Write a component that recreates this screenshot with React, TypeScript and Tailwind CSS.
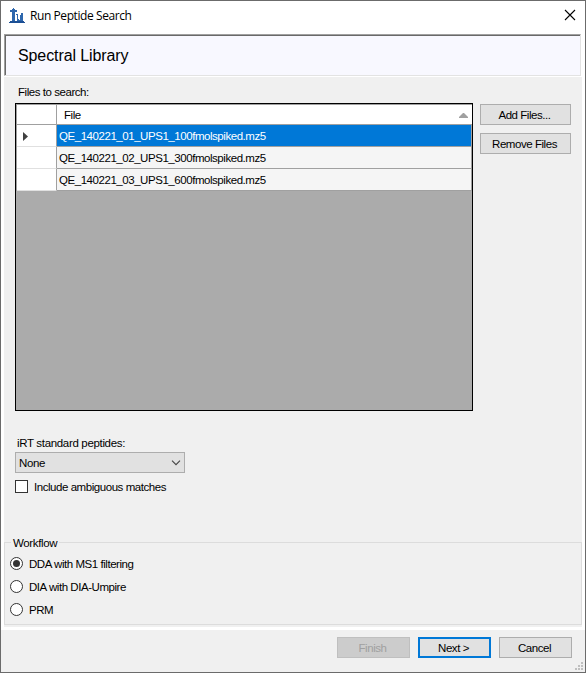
import type { ReactNode } from "react";

const files = [
  "QE_140221_01_UPS1_100fmolspiked.mz5",
  "QE_140221_02_UPS1_300fmolspiked.mz5",
  "QE_140221_03_UPS1_600fmolspiked.mz5",
];

function Label({ children, className = "" }: { children: ReactNode; className?: string }) {
  return <span className={`block whitespace-pre leading-[14px] ${className}`}>{children}</span>;
}

function Button({ children, className = "" }: { children: ReactNode; className?: string }) {
  return (
    <button
      className={`flex h-[21px] shrink-0 items-center justify-center whitespace-pre pr-[2px] leading-[14px] ${className}`}
    >
      {children}
    </button>
  );
}

function Radio({ label, checked = false }: { label: string; checked?: boolean }) {
  return (
    <label className="flex h-[23px] items-center">
      <svg width="13" height="13" viewBox="0 0 13 13" className="mr-[6px]">
        <circle cx="6.5" cy="6.5" r="6" fill="#fff" stroke="#333" />
        {checked && <circle cx="6.5" cy="6.5" r="3.5" fill="#333" />}
      </svg>
      <Label>{label}</Label>
    </label>
  );
}

export default function App() {
  return (
    <div className="flex h-[673px] w-[586px] flex-col overflow-hidden border border-[#6b6b6b] bg-white font-['Liberation_Sans',sans-serif] text-[11.5px] tracking-[-0.45px] text-black">
      <header className="flex h-[33px] shrink-0 items-center pl-[8px] pr-[9px]">
        <svg width="16" height="16" viewBox="0 0 16 16" className="mt-[-3px] shrink-0">
          <path
            d="M4 0h1v1h1v1h2v2H6v9H3V4H1V2h2V1h1zM7 6h2v5h1v1h1V7h1V5h2v8H8V7H7z"
            fill="#2e67ad"
          />
          <path d="M0 14h1v-1h14v1h1v1H0z" fill="#1c4f94" />
        </svg>
        <span className="ml-[5px] mt-[-4px] flex-1 whitespace-pre font-['Open_Sans',sans-serif] text-[12px] leading-[16px] tracking-[-0.42px]">
          Run Peptide Search
        </span>
        <svg width="12" height="12" viewBox="0 0 12 12" className="mt-[-6px]" stroke="#000" strokeWidth="1.1">
          <path d="M1 1l10 10M11 1L1 11" />
        </svg>
      </header>

      <main className="mx-[3px] flex h-[593px] shrink-0 flex-col bg-[#f0f0f0]">
        <div className="h-[43px] shrink-0 border-b border-r border-white">
          <div className="h-full border-b border-l border-r border-t border-b-[#e3e3e3] border-l-[#a0a0a0] border-r-[#e3e3e3] border-t-[#a0a0a0]">
            <div className="flex h-full items-center border-l border-t border-[#696969] bg-[#f8f8ff] pl-[12px]">
              <span className="whitespace-pre text-[16px] leading-[20px] tracking-[-0.1px]">Spectral Library</span>
            </div>
          </div>
        </div>

        <Label className="ml-[14px] mt-[8px]">Files to search:</Label>
        <div className="ml-[11px] mt-[4px] flex">
          <div className="h-[308px] w-[458px] border border-black bg-[#ababab]">
            <div className="h-[87px] border-l border-t border-[#a0a0a0]">
              <div className="flex h-[20px] border-b border-[#a0a0a0] bg-white">
                <div className="w-[40px] border-r border-[#a0a0a0]" />
                <div className="flex flex-1 items-center justify-between pl-[7px] pr-[4px]">
                  <Label>File</Label>
                  <svg width="9" height="5" viewBox="0 0 9 5" className="mt-[2px]" fill="#a0a0a0">
                    <path d="M4 0h1l4 4v1H0V4z" />
                  </svg>
                </div>
              </div>
              {files.map((file, i) => (
                <div key={file} className="flex h-[22px]">
                  <div className="flex w-[40px] items-center border-b border-r border-b-[#e0e0e0] border-r-[#a0a0a0] bg-white pl-[6px]">
                    {i === 0 && (
                      <svg width="5" height="9" viewBox="0 0 5 9" className="mt-[2px]" fill="#404040">
                        <path d="M0 0l5 4.5L0 9z" />
                      </svg>
                    )}
                  </div>
                  <div
                    className={`flex flex-1 items-center border-b border-r border-[#a0a0a0] pl-[2px] ${i === 0 ? "bg-[#0078d7] text-white" : "bg-[#f5f5f5]"}`}
                  >
                    <Label>{file}</Label>
                  </div>
                </div>
              ))}
            </div>
          </div>
          <div className="ml-[7px] mt-[1px] flex flex-col gap-[8px]">
            <Button className="w-[91px] border border-[#adadad] bg-[#e1e1e1]">Add Files...</Button>
            <Button className="w-[91px] border border-[#adadad] bg-[#e1e1e1]">Remove Files</Button>
          </div>
        </div>

        <Label className="ml-[13px] mt-[25px] tracking-[-0.33px]">iRT standard peptides:</Label>
        <div className="ml-[11px] mt-[2px] flex h-[21px] w-[170px] shrink-0 items-center justify-between border border-[#adadad] bg-[#e1e1e1] pl-[3px] pr-[3px]">
          <Label className="tracking-[-0.35px]">None</Label>
          <svg width="10" height="6" viewBox="0 0 10 6" fill="none" stroke="#444" strokeWidth="1.1">
            <path d="M1 .7l4 4 4-4" />
          </svg>
        </div>
        <label className="ml-[11px] mt-[7px] flex h-[13px] shrink-0 items-center">
          <span className="mr-[6px] h-[13px] w-[13px] border border-[#333] bg-white" />
          <Label>Include ambiguous matches</Label>
        </label>

        <fieldset className="mt-[42px] h-[90px] shrink-0 border border-[#dcdcdc]">
          <legend className="ml-[6px] h-[14px] px-[2px] pt-[1px]">
            <Label className="tracking-[-0.37px]">Workflow</Label>
          </legend>
          <div className="ml-[5px] mt-[3px] flex flex-col">
            <Radio label="DDA with MS1 filtering" checked />
            <Radio label="DIA with DIA-Umpire" />
            <Radio label="PRM" />
          </div>
        </fieldset>
      </main>

      <footer className="mt-[3px] flex flex-1 justify-end bg-[#f0f0f0] pr-[2px] pt-[7px]">
        <div className="flex gap-[8px]">
          <Button className="w-[73px] border border-[#bfbfbf] bg-[#cccccc] text-[#a0a0a0]">Finish</Button>
          <Button className="w-[73px] border-2 border-[#0078d7] bg-[#e1e1e1]">{"Next >"}</Button>
          <Button className="w-[73px] border border-[#adadad] bg-[#e1e1e1]">Cancel</Button>
        </div>
        <svg width="8" height="8" viewBox="0 0 8 8" fill="#bfbfbf" className="ml-[3px] mt-[25px]">
          <path d="M6 0h2v2H6zM3 3h2v2H3zM6 3h2v2H6zM0 6h2v2H0zM3 6h2v2H3zM6 6h2v2H6z" />
        </svg>
      </footer>
    </div>
  );
}
